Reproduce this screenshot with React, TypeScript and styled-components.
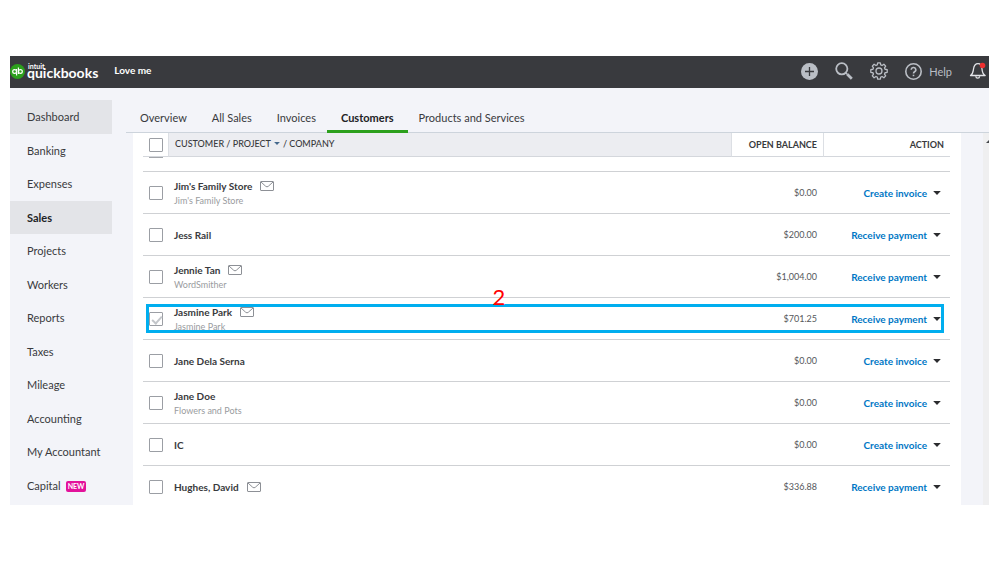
import React from "react";
import styled, { createGlobalStyle, css } from "styled-components";

const Global = createGlobalStyle`
  * { box-sizing: border-box; }
  body {
    margin: 0;
    background: #fff;
    font-family: Lato, "Open Sans", sans-serif;
    color: #393a3d;
  }
  button, input, a { font: inherit; color: inherit; }
`;

const Frame = styled.div`
  display: flex;
  flex-direction: column;
  height: calc(100vh - 113px);
  margin: 56px 10px 57px;
  background: #f3f4f9;
  overflow: hidden;
`;

const TopBar = styled.header`
  display: flex;
  flex: none;
  align-items: center;
  height: 32px;
  padding: 0 2px 2px 0;
  background: #393a3e;
  color: #fff;
`;

const Brand = styled.a`
  display: flex;
  align-items: center;
  gap: 2px;
  text-decoration: none;
`;

const Wordmark = styled.span`
  display: grid;
  font-size: 14px;
  font-weight: 700;
  line-height: 14px;
`;

const Intuit = styled.span`
  height: 4px;
  padding-left: 1px;
  font-size: 7px;
  line-height: 8px;
`;

const Company = styled.span`
  flex: 1;
  padding: 0 0 2px 16px;
  font-size: 10px;
  font-weight: 700;
`;

const Tools = styled.div`
  display: flex;
  align-items: center;
  gap: 17px;
`;

const ToolButton = styled.button`
  display: flex;
  align-items: center;
  gap: 7px;
  padding: 0;
  border: 0;
  background: none;
  color: #babec5;
  font-size: 11px;
  cursor: pointer;
  svg { display: block; }
`;

const Body = styled.div`
  display: flex;
  flex: 1;
  min-height: 0;
`;

const SideNav = styled.nav`
  display: flex;
  flex: none;
  flex-direction: column;
  width: 102px;
  padding: 12px 0 3px;
`;

const SideLink = styled.a<{ $shaded?: boolean; $current?: boolean }>`
  display: flex;
  flex: 1;
  align-items: center;
  gap: 5px;
  padding-left: 17px;
  background: ${(p) => (p.$shaded ? "#e3e4e8" : "transparent")};
  color: ${(p) => (p.$current ? "#222326" : "#393a3d")};
  font-size: 11px;
  font-weight: ${(p) => (p.$current ? 700 : 400)};
  text-decoration: none;
  white-space: nowrap;
`;

const NewBadge = styled.span`
  margin-top: 2px;
  padding: 0 2px;
  border-radius: 2px;
  background: #e3129b;
  color: #fff;
  font-size: 7px;
  font-weight: 700;
  line-height: 11px;
`;

const Main = styled.main`
  display: flex;
  flex: 1;
  flex-direction: column;
  min-width: 0;
  padding-left: 14px;
`;

const Tabs = styled.nav`
  display: flex;
  flex: none;
  gap: 1px;
  height: 45px;
  padding-left: 2px;
  border-bottom: 1px solid #cdd4dc;
`;

const Tab = styled.a<{ $current?: boolean }>`
  display: flex;
  align-items: center;
  height: 45px;
  margin: ${(p) => (p.$current ? "0 -2px" : "0")};
  padding: ${(p) => (p.$current ? "16px 14px 0" : "16px 12px 0")};
  border-bottom: 3px solid ${(p) => (p.$current ? "#2ca01c" : "transparent")};
  color: ${(p) => (p.$current ? "#222326" : "#393a3d")};
  font-size: 11px;
  font-weight: ${(p) => (p.$current ? 700 : 400)};
  text-decoration: none;
  white-space: nowrap;
`;

const Content = styled.div`
  display: flex;
  flex: 1;
  min-height: 0;
  padding-left: 7px;
`;

const Panel = styled.section`
  flex: 1;
  padding: 0 11px 0 10px;
  background: #fff;
  overflow: hidden;
`;

const ScrollTrack = styled.div`
  flex: none;
  width: 6px;
  margin-left: 22px;
  background: #efeff0;
  overflow: hidden;
  svg { display: block; margin: 6px 0 0 3px; }
`;

const Table = styled.table`
  width: 100%;
  border-collapse: separate;
  border-spacing: 0;
  table-layout: fixed;
`;

const Col = styled.col<{ $width?: number }>`
  ${(p) => p.$width && css`width: ${p.$width}px;`}
`;

const HeadCell = styled.th<{ $shaded?: boolean; $right?: number }>`
  height: 24px;
  padding: 0 ${(p) => p.$right ?? 0}px 0 6px;
  border-bottom: 1px solid #d4d7dc;
  border-left: 1px solid #dcdfe4;
  background: ${(p) => (p.$shaded ? "#ecedf1" : "#fff")};
  font-size: 9px;
  font-weight: ${(p) => (p.$shaded ? 500 : 700)};
  line-height: 12px;
  text-align: ${(p) => (p.$right ? "right" : "left")};
  white-space: nowrap;
  &:first-child { border-left: 0; }
`;

const SortButton = styled.button`
  display: flex;
  align-items: center;
  gap: 3px;
  padding: 0 0 2px;
  border: 0;
  background: none;
`;

const Row = styled.tr`
  position: relative;
`;

const Cell = styled.td<{ $right?: number }>`
  height: 42px;
  padding: 0 ${(p) => p.$right ?? 0}px 0 6px;
  border-bottom: 1px solid #cfd1d4;
  text-align: ${(p) => (p.$right ? "right" : "left")};
  font-size: 10px;
  line-height: 14px;
  white-space: nowrap;
`;

const GapCell = styled.td`
  height: 15px;
  padding: 0;
  border-bottom: 1px solid #cfd1d4;
`;

const BoxEdge = styled.div`
  width: 14px;
  height: 1px;
  margin: 0 0 13px 6px;
  background: #a3a6ab;
`;

const Check = styled.input`
  display: block;
  appearance: none;
  width: 14px;
  height: 14px;
  margin: 1px 0 0;
  border: 1px solid #9b9ea4;
  border-radius: 1px;
  background: #fff;
  &:checked::after {
    content: "";
    display: block;
    width: 4px;
    height: 8px;
    margin: 1px 0 0 4px;
    border: solid #c3c6ca;
    border-width: 0 2px 2px 0;
    transform: rotate(42deg);
  }
`;

const Name = styled.label`
  display: flex;
  align-items: center;
  gap: 8px;
  padding-top: 1px;
  font-weight: 700;
  line-height: 14px;
`;

const Sub = styled.div`
  padding-top: 1px;
  color: #9a9ca0;
  font-size: 9px;
`;

const Amount = styled.span`
  color: #55575b;
  font-size: 9px;
`;

const Action = styled.div`
  display: flex;
  align-items: center;
  justify-content: flex-end;
  gap: 6px;
  padding-top: 1px;
  color: #0077c5;
  font-weight: 700;
  a { text-decoration: none; }
`;

const CaretButton = styled.button`
  display: flex;
  padding: 0;
  border: 0;
  background: none;
`;

const Highlight = styled.div`
  position: absolute;
  inset: 6px 6px 7px 3px;
  border: 3px solid #00aeef;
  pointer-events: none;
`;

const StepNumber = styled.span`
  position: absolute;
  bottom: 20px;
  left: 50%;
  transform: translateX(-50%);
  margin-left: -46px;
  color: #f00;
  font-size: 22px;
  font-weight: 400;
  line-height: 26px;
`;

const Mail = () => (
  <svg width="14" height="10" viewBox="0 0 14 10" fill="none" stroke="#8d9096" aria-label="Email">
    <rect x="0.5" y="0.5" width="13" height="9" rx="0.5" />
    <path d="M1 1l4.6 4.2a2 2 0 0 0 2.8 0L13 1" />
  </svg>
);

const Caret = ({ color = "#2b2c2f", size = 8 }: { color?: string; size?: number }) => (
  <svg width={size} height={size / 2} viewBox="0 0 8 4" fill={color} aria-hidden="true">
    <path d="M0.2 0h7.6L4 4z" />
  </svg>
);

const Logo = () => (
  <svg width="15" height="15" viewBox="0 0 30 30" aria-hidden="true">
    <circle cx="15" cy="15" r="15" fill="#2ca01c" />
    <g fill="none" stroke="#fff" strokeWidth="2.4">
      <circle cx="9.2" cy="15" r="3.8" />
      <path d="M13.2 10v13" />
      <circle cx="20.8" cy="15" r="3.800" />
      <path d="M16.800 7v13" />
    </g>
  </svg>
);

const PlusIcon = () => (
  <svg width="17" height="17" viewBox="0 0 17 17" aria-hidden="true">
    <circle cx="8.5" cy="8.5" r="8.5" fill="#babec5" />
    <path d="M8.5 4v9M4 8.5h9" stroke="#393a3e" strokeWidth="1.3" />
  </svg>
);

const SearchIcon = () => (
  <svg width="18" height="18" viewBox="0 0 18 18" fill="none" stroke="#babec5" aria-hidden="true">
    <circle cx="6.8" cy="6.800" r="5.600" strokeWidth="1.800" />
    <path d="M11 11l1.500 1.500" strokeWidth="1.500" />
    <path d="M12.300 12.300l4.500 4.400" strokeWidth="2.800" />
  </svg>
);

const gearPath = (() => {
  const pts: string[] = [];
  const steps: [number, number][] = [[-16, 6.3], [-9, 8.3], [9, 8.3], [16, 6.3]];
  for (let i = 0; i < 8; i++) {
    for (const [offset, r] of steps) {
      const a = ((i * 45 + offset) * Math.PI) / 180;
      pts.push(`${(9 + r * Math.cos(a)).toFixed(2)} ${(9 + r * Math.sin(a)).toFixed(2)}`);
    }
  }
  return `M${pts.join("L")}Z`;
})();

const GearIcon = () => (
  <svg width="18" height="18" viewBox="0 0 18 18" fill="none" stroke="#babec5" strokeWidth="1.3" strokeLinejoin="round" aria-hidden="true">
    <path d={gearPath} />
    <circle cx="9" cy="9" r="3" />
  </svg>
);

const HelpIcon = () => (
  <svg width="17" height="17" viewBox="0 0 17 17" fill="none" stroke="#babec5" strokeWidth="1.6" aria-hidden="true">
    <circle cx="8.5" cy="8.5" r="7.7" />
    <path d="M6.200 6.800a2.300 2.300 0 1 1 3.400 2c-.8.500-1.100.8-1.100 1.700" />
    <path d="M8.500 11.700v1.500" />
  </svg>
);

const BellIcon = () => (
  <svg width="18" height="18" viewBox="0 0 18 18" fill="none" stroke="#e3e4e8" strokeWidth="1.3" aria-hidden="true">
    <path d="M1.500 13.500c2.500-1.500 2.500-3.500 3-6.500C5 3.500 6.500 1.700 9 1.700c2.300 0 3.800 1.800 4 5.300.2 3 .5 5 3.200 6.500z" strokeLinejoin="round" />
    <path d="M6.800 14.200c.2 2.600 3.600 2.600 3.900 0" />
    <circle cx="13.500" cy="3.500" r="2.800" fill="#ee2f2f" stroke="none" />
  </svg>
);

const sections = [
  "Dashboard", "Banking", "Expenses", "Sales", "Projects", "Workers",
  "Reports", "Taxes", "Mileage", "Accounting", "My Accountant", "Capital",
];

const tabs = ["Overview", "All Sales", "Invoices", "Customers", "Products and Services"];

type Customer = {
  name: string;
  company?: string;
  email?: boolean;
  balance: string;
  action: string;
  selected?: boolean;
};

const customers: Customer[] = [
  { name: "Jim's Family Store", company: "Jim's Family Store", email: true, balance: "$0.00", action: "Create invoice" },
  { name: "Jess Rail", balance: "$200.00", action: "Receive payment" },
  { name: "Jennie Tan", company: "WordSmither", email: true, balance: "$1,004.00", action: "Receive payment" },
  { name: "Jasmine Park", company: "Jasmine Park", email: true, balance: "$701.25", action: "Receive payment", selected: true },
  { name: "Jane Dela Serna", balance: "$0.00", action: "Create invoice" },
  { name: "Jane Doe", company: "Flowers and Pots", balance: "$0.00", action: "Create invoice" },
  { name: "IC", balance: "$0.00", action: "Create invoice" },
  { name: "Hughes, David", email: true, balance: "$336.88", action: "Receive payment" },
];

export default function App() {
  return (
    <>
      <Global />
      <Frame>
        <TopBar>
          <Brand href="#home">
            <Logo />
            <Wordmark>
              <Intuit>intuit</Intuit>
              quickbooks
            </Wordmark>
          </Brand>
          <Company>Love me</Company>
          <Tools>
            <ToolButton aria-label="Create"><PlusIcon /></ToolButton>
            <ToolButton aria-label="Search"><SearchIcon /></ToolButton>
            <ToolButton aria-label="Settings"><GearIcon /></ToolButton>
            <ToolButton><HelpIcon />Help</ToolButton>
            <ToolButton aria-label="Notifications"><BellIcon /></ToolButton>
          </Tools>
        </TopBar>
        <Body>
          <SideNav>
            {sections.map((s) => (
              <SideLink key={s} href="#section" $shaded={s === "Dashboard" || s === "Sales"} $current={s === "Sales"}>
                {s}
                {s === "Capital" && <NewBadge>NEW</NewBadge>}
              </SideLink>
            ))}
          </SideNav>
          <Main>
            <Tabs>
              {tabs.map((t) => (
                <Tab key={t} href="#tab" $current={t === "Customers"}>{t}</Tab>
              ))}
            </Tabs>
            <Content>
              <Panel>
                <Table>
                  <colgroup>
                    <Col $width={25} />
                    <Col />
                    <Col $width={92} />
                    <Col $width={127} />
                  </colgroup>
                  <thead>
                    <tr>
                      <HeadCell><Check type="checkbox" aria-label="Select all" /></HeadCell>
                      <HeadCell $shaded>
                        <SortButton>CUSTOMER / PROJECT <Caret color="#44688c" size={6} /> / COMPANY</SortButton>
                      </HeadCell>
                      <HeadCell $right={6}>OPEN BALANCE</HeadCell>
                      <HeadCell $right={6}>ACTION</HeadCell>
                    </tr>
                  </thead>
                  <tbody>
                    <tr>
                      <GapCell colSpan={4}><BoxEdge /></GapCell>
                    </tr>
                    {customers.map((c, i) => (
                      <Row key={c.name}>
                        <Cell><Check id={`customer-${i}`} type="checkbox" defaultChecked={c.selected} /></Cell>
                        <Cell>
                          <Name htmlFor={`customer-${i}`}>{c.name}{c.email && <Mail />}</Name>
                          {c.company && <Sub>{c.company}</Sub>}
                        </Cell>
                        <Cell $right={6}><Amount>{c.balance}</Amount></Cell>
                        <Cell $right={9}>
                          <Action>
                            <a href="#action">{c.action}</a>
                            <CaretButton aria-label={`More actions for ${c.name}`}><Caret /></CaretButton>
                          </Action>
                          {c.selected && <Highlight><StepNumber>2</StepNumber></Highlight>}
                        </Cell>
                      </Row>
                    ))}
                  </tbody>
                </Table>
              </Panel>
              <ScrollTrack>
                <svg width="8" height="4" viewBox="0 0 8 4" fill="#44464a" aria-hidden="true"><path d="M0 4h8L4 0z" /></svg>
              </ScrollTrack>
            </Content>
          </Main>
        </Body>
      </Frame>
    </>
  );
}
